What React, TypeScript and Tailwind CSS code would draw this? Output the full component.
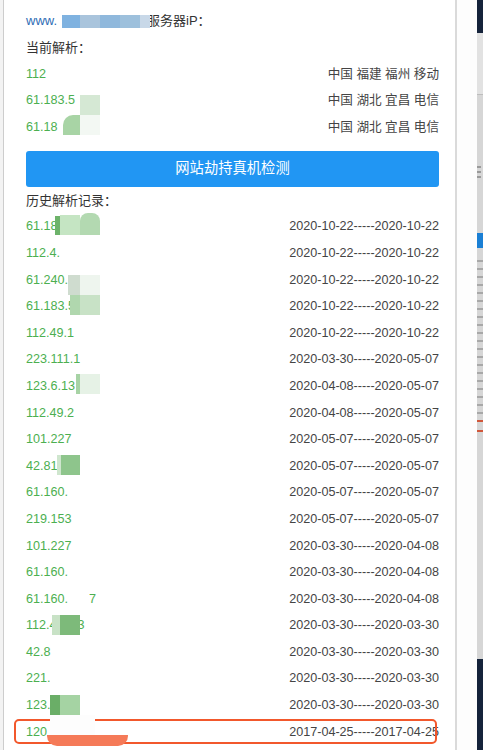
import React from 'react';

type Row = { ip: string; right: string };

const current: Row[] = [
    { ip: '112', right: '中国 福建 福州 移动' },
    { ip: '61.183.5', right: '中国 湖北 宜昌 电信' },
    { ip: '61.18', right: '中国 湖北 宜昌 电信' },
];

const history: Row[] = [
    { ip: '61.18', right: '2020-10-22-----2020-10-22' },
    { ip: '112.4.', right: '2020-10-22-----2020-10-22' },
    { ip: '61.240.', right: '2020-10-22-----2020-10-22' },
    { ip: '61.183.5', right: '2020-10-22-----2020-10-22' },
    { ip: '112.49.1', right: '2020-10-22-----2020-10-22' },
    { ip: '223.111.1', right: '2020-03-30-----2020-05-07' },
    { ip: '123.6.13', right: '2020-04-08-----2020-05-07' },
    { ip: '112.49.2', right: '2020-04-08-----2020-05-07' },
    { ip: '101.227', right: '2020-05-07-----2020-05-07' },
    { ip: '42.81', right: '2020-05-07-----2020-05-07' },
    { ip: '61.160.', right: '2020-05-07-----2020-05-07' },
    { ip: '219.153', right: '2020-05-07-----2020-05-07' },
    { ip: '101.227', right: '2020-03-30-----2020-04-08' },
    { ip: '61.160.', right: '2020-03-30-----2020-04-08' },
    { ip: '61.160.      7', right: '2020-03-30-----2020-04-08' },
    { ip: '112.4      3', right: '2020-03-30-----2020-03-30' },
    { ip: '42.8', right: '2020-03-30-----2020-03-30' },
    { ip: '221.', right: '2020-03-30-----2020-03-30' },
    { ip: '123.', right: '2020-03-30-----2020-03-30' },
];

// mosaic blots that hide parts of the domain and the addresses
const blots: { x: number; y: number; w: number; h: number; c: string; r?: string }[] = [
    { x: 62, y: 15, w: 18, h: 13, c: '#7fb2e0' },
    { x: 80, y: 15, w: 20, h: 13, c: '#a9c4dc' },
    { x: 100, y: 15, w: 20, h: 13, c: '#8fb8dc' },
    { x: 120, y: 15, w: 20, h: 13, c: '#9dc0dc' },
    { x: 140, y: 15, w: 10, h: 13, c: '#c8d8e8' },
    { x: 80, y: 95, w: 20, h: 20, c: '#d5e8d4' },
    { x: 63, y: 115, w: 17, h: 20, c: '#a8d4a5', r: '10px 0 0 0' },
    { x: 80, y: 115, w: 20, h: 20, c: '#f3f8f3' },
    { x: 55, y: 216, w: 5, h: 19, c: '#6db36a' },
    { x: 60, y: 215, w: 20, h: 20, c: '#c5e5c3' },
    { x: 80, y: 213, w: 20, h: 22, c: '#b3d9b1', r: '8px 8px 0 0' },
    { x: 68, y: 275, w: 12, h: 20, c: '#cfdccf' },
    { x: 80, y: 275, w: 20, h: 20, c: '#eef5ee' },
    { x: 70, y: 295, w: 10, h: 20, c: '#b0d7ae' },
    { x: 80, y: 295, w: 20, h: 20, c: '#c8e2c6' },
    { x: 76, y: 374, w: 4, h: 20, c: '#a7d3a5' },
    { x: 80, y: 374, w: 20, h: 20, c: '#e6f2e6' },
    { x: 57, y: 455, w: 4, h: 20, c: '#cfe6ce' },
    { x: 61, y: 455, w: 19, h: 20, c: '#8ec58c' },
    { x: 52, y: 615, w: 8, h: 20, c: '#c8e2c6' },
    { x: 60, y: 615, w: 20, h: 20, c: '#7dba7a' },
    { x: 50, y: 695, w: 10, h: 20, c: '#6aae67' },
    { x: 60, y: 695, w: 20, h: 20, c: '#a5d3a3' },
    { x: 50, y: 715, w: 45, h: 20, c: '#fdfdfd' },
    { x: 47, y: 735, w: 81, h: 11, c: '#f57a58', r: '0 0 10px 10px' },
];

const font = { fontFamily: '"Liberation Sans", "Noto Sans CJK SC", sans-serif' };

const IpRow: React.FC<{ row: Row; highlight?: boolean }> = ({ row, highlight }) => (
    <div className="relative flex h-[26.6px] items-center justify-between text-[12.6px]">
        <span className="whitespace-pre text-[#4caf50]">{row.ip}</span>
        <span className="text-[#444]">{row.right}</span>
        {highlight && (
            <div className="absolute left-[-12px] right-[2px] top-0 h-[25px] rounded-[5px] border-2 border-[#f2582c]" />
        )}
    </div>
);

export default function App() {
    return (
        <div className="relative flex h-[750px] w-[483px] overflow-hidden bg-white" style={font}>
            <div className="w-[3px] bg-[#f3f3f3]" />
            <div className="w-px bg-[#cdcdcd]" />

            {/* dialog panel */}
            <div className="w-[451px] pl-[22px] pr-[16px] pt-[7.7px]">
                <div className="flex h-[26.6px] items-center text-[13px]">
                    <span className="text-[#2f6db5]">www.</span>
                    <span className="w-[90px]" />
                    <span className="text-[#333]">服务器iP：</span>
                </div>
                <div className="flex h-[26.6px] items-center text-[13px] text-[#333]">当前解析：</div>
                {current.map((r, i) => (
                    <IpRow key={i} row={r} />
                ))}
                <button className="mt-[10.3px] flex h-[36px] w-full items-center justify-center rounded-[3px] bg-[#2196f3] text-[14.3px] text-white">
                    网站劫持真机检测
                </button>
                <div className="flex h-[26.6px] items-center text-[13px] text-[#333]">历史解析记录：</div>
                {history.map((r, i) => (
                    <IpRow key={i} row={r} />
                ))}
                <IpRow row={{ ip: '120', right: '2017-04-25-----2017-04-25' }} highlight />
            </div>

            <div className="w-[2px] bg-[#dadada]" />
            <div className="w-[20px] bg-[#fdfdfd]" />

            {/* page thumbnail strip */}
            <div className="flex w-[6px] flex-col">
                <div className="h-[33px] bg-[#15233b]" />
                <div className="h-[61px] bg-[#e2e2e2]" />
                <div className="h-px bg-[#bdbdbd]" />
                <div className="flex h-[564px] flex-col bg-[#d6d6d6] pt-[70px]">
                    <div className="mt-[1px] h-[2px] w-[4px] bg-[#9a9a9a]" />
                    <div className="mt-[3px] h-[2px] w-[4px] bg-[#9a9a9a]" />
                    <div className="mt-[3px] h-[2px] w-[4px] bg-[#9a9a9a]" />
                    <div className="mt-[55px] h-[15px] bg-[#1a7fd4]" />
                    <div className="mt-[6px] h-[160px] bg-[repeating-linear-gradient(#d6d6d6_0px,#d6d6d6_6px,#a8a8a8_6px,#a8a8a8_8px)]" />
                    <div className="mt-[6px] h-[2px] bg-[#d0573a]" />
                    <div className="mt-[8px] h-[2px] bg-[#d0573a]" />
                </div>
                <div className="flex-1 bg-[#15233b]" />
            </div>

            {blots.map((b, i) => (
                <div
                    key={i}
                    className="absolute"
                    style={{ left: b.x, top: b.y, width: b.w, height: b.h, background: b.c, borderRadius: b.r }}
                />
            ))}
        </div>
    );
}
